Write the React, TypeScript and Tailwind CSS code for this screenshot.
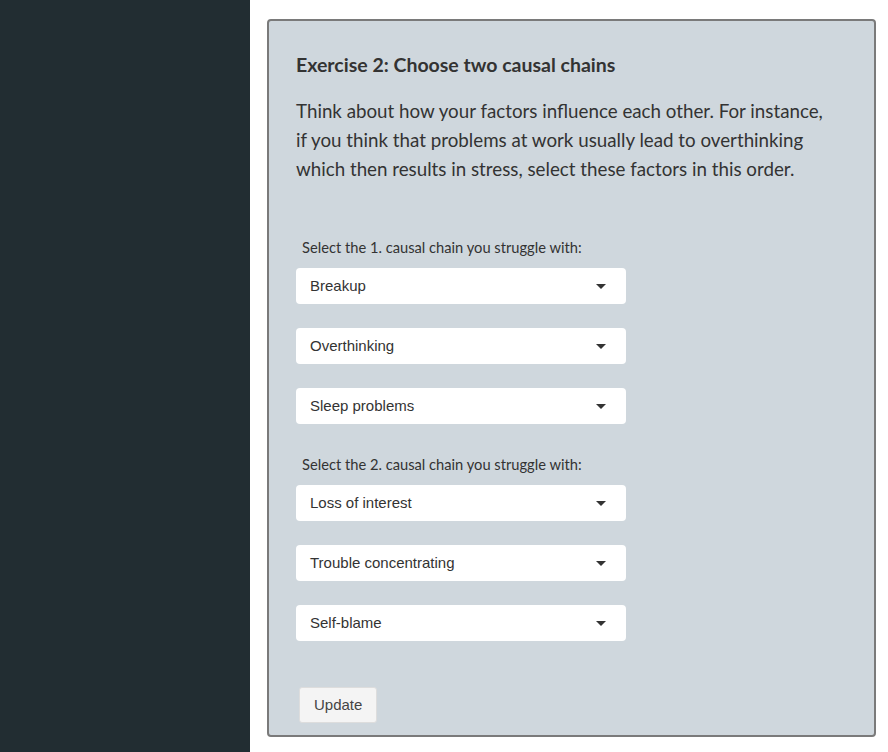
import React from "react";

const chains = [
  ["Breakup", "Overthinking", "Sleep problems"],
  ["Loss of interest", "Trouble concentrating", "Self-blame"],
];

function Select({ value }: { value: string }) {
  return (
    <div className="flex h-9 w-[330px] items-center justify-between rounded bg-white pl-[14px] pr-[20px] text-[15px] text-[#333] [font-family:'Liberation_Sans',Arial,sans-serif]">
      <span>{value}</span>
      <span className="h-0 w-0 border-x-[5px] border-t-[5px] border-x-transparent border-t-[#333]" />
    </div>
  );
}

export default function App() {
  return (
    <div className="flex min-h-[752px] bg-white [font-family:Lato,'Noto_Sans',sans-serif]">
      <aside className="w-[250px] shrink-0 bg-[#222d32]" />
      <main className="flex-1 pl-[17px] pr-3 pt-[19px] pb-4">
        <div className="flex h-[718px] w-[609px] flex-col rounded-[4px] border-2 border-[#7a7a7a] bg-[#cfd7dd] px-[27px] pt-[29px]">
          <h2 className="text-[19.5px] font-bold text-[#333]">Exercise 2: Choose two causal chains</h2>
          <p className="mt-[17px] max-w-[540px] text-[18.75px] leading-[29px] text-[#333]">
            Think about how your factors influence each other. For instance, if you think that problems at work usually
            lead to overthinking which then results in stress, select these factors in this order.
          </p>
          <div className="mt-[53px] flex flex-col gap-[29px]">
            {chains.map((chain, i) => (
              <div key={i} className="flex flex-col">
                <label className="mb-[10px] pl-[6px] text-[14.7px] text-[#333]">
                  Select the {i + 1}. causal chain you struggle with:
                </label>
                <div className="flex flex-col gap-6">
                  {chain.map((v) => (
                    <Select key={v} value={v} />
                  ))}
                </div>
              </div>
            ))}
          </div>
          <div className="mt-[46px] pl-[3px]">
            <button className="h-[36px] rounded-[3px] border border-[#ddd] bg-[#f4f4f4] px-[14px] text-[15px] text-[#444] [font-family:'Liberation_Sans',Arial,sans-serif]">
              Update
            </button>
          </div>
        </div>
      </main>
    </div>
  );
}
